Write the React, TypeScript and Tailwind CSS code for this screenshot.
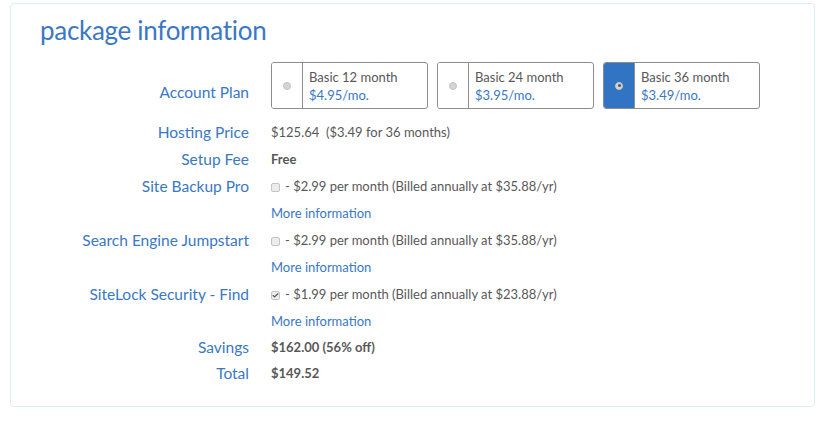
import { Check } from "lucide-react";

// ─── Data ────────────────────────────────────────────────────────────────────
const PLANS = [
  { id: 12, name: "Basic 12 month", price: "$4.95/mo." },
  { id: 24, name: "Basic 24 month", price: "$3.95/mo." },
  { id: 36, name: "Basic 36 month", price: "$3.49/mo." },
];

const EXTRAS = [
  { label: "Site Backup Pro", text: "- $2.99 per month (Billed annually at $35.88/yr)", checked: false },
  { label: "Search Engine Jumpstart", text: "- $2.99 per month (Billed annually at $35.88/yr)", checked: false },
  { label: "SiteLock Security - Find", text: "- $1.99 per month (Billed annually at $23.88/yr)", checked: true },
];

// ─── Bits ────────────────────────────────────────────────────────────────────
function Row({ label, children, h = "h-[27px]" }: { label?: string; children: React.ReactNode; h?: string }) {
  return (
    <div className={`flex items-center ${h}`}>
      <div className="w-[238px] text-right text-[15.5px] text-[#3a78c4] shrink-0">{label}</div>
      <div className="pl-[22px] text-[13px] text-[#585858]">{children}</div>
    </div>
  );
}

function Checkbox({ checked }: { checked: boolean }) {
  return (
    <span className="inline-flex items-center justify-center w-[9px] h-[9px] mr-[5px] rounded-[2px] border border-[#c4c4c4] bg-[#ececec] align-middle">
      {checked && <Check size={7} strokeWidth={4} className="text-[#555]" />}
    </span>
  );
}

function PlanBox({ plan, selected }: { plan: (typeof PLANS)[number]; selected: boolean }) {
  return (
    <div className="flex w-[157px] h-[47px] border border-[#8d8d8d] rounded-[3px] overflow-hidden">
      <div
        className={`w-[31px] shrink-0 flex items-center justify-center border-r border-[#8d8d8d] ${
          selected ? "bg-[#3174c4]" : "bg-white"
        }`}
      >
        <span className="w-[8px] h-[8px] rounded-full bg-[#d4d4d4] border border-[#c2c2c2] flex items-center justify-center">
          {selected && <span className="w-[3px] h-[3px] rounded-full bg-[#555]" />}
        </span>
      </div>
      <div className="flex flex-col justify-center pl-[6px] leading-[18px]">
        <span className="text-[13px] text-[#585858]">{plan.name}</span>
        <span className="text-[13px] text-[#3a78c4]">{plan.price}</span>
      </div>
    </div>
  );
}

// ─── Page ────────────────────────────────────────────────────────────────────
export default function App() {
  return (
    <div className="w-[840px] h-[423px] bg-white pt-[3px] pl-[10px] font-['Lato','Open_Sans',sans-serif]">
      <div className="w-[805px] h-[404px] border border-[#dcebf8] rounded-[4px]">
        <h1 className="pl-[29px] pt-[8px] text-[26px] leading-[36px] text-[#3a78c4] tracking-[-0.3px]">
          package information
        </h1>

        {/* Account plan */}
        <div className="flex items-center mt-[14px] h-[47px]">
          <div className="w-[238px] text-right text-[15.5px] text-[#3a78c4] shrink-0 pt-[14px]">Account Plan</div>
          <div className="flex gap-[9px] pl-[22px]">
            {PLANS.map((p) => (
              <PlanBox key={p.id} plan={p} selected={p.id === 36} />
            ))}
          </div>
        </div>

        <div className="flex flex-col mt-[10px]">
          <Row label="Hosting Price">$125.64&nbsp; ($3.49 for 36 months)</Row>
          <Row label="Setup Fee">
            <span className="font-bold">Free</span>
          </Row>
          {EXTRAS.map((e) => (
            <div key={e.label}>
              <Row label={e.label}>
                <Checkbox checked={e.checked} />
                {e.text}
              </Row>
              <Row>
                <span className="text-[#3a78c4]">More information</span>
              </Row>
            </div>
          ))}
          <Row label="Savings" h="h-[25px]">
            <span className="font-bold">$162.00 (56% off)</span>
          </Row>
          <Row label="Total">
            <span className="font-bold">$149.52</span>
          </Row>
        </div>
      </div>
    </div>
  );
}
